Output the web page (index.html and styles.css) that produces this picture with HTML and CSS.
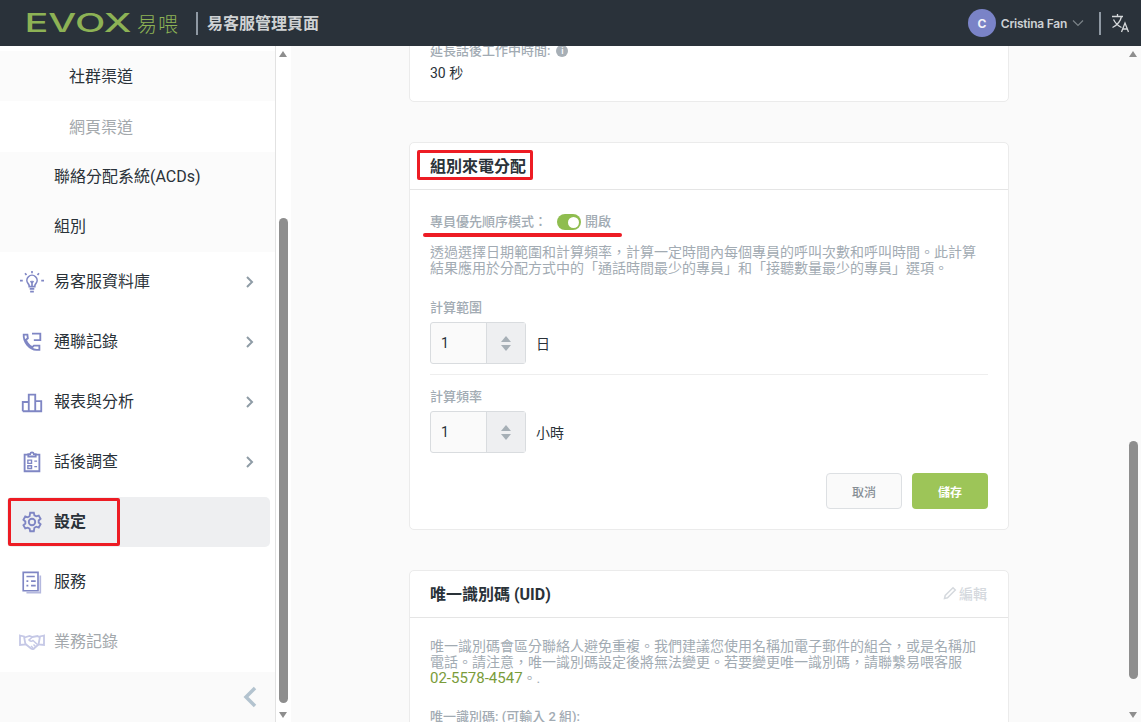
FILE: index.html
```html
<!DOCTYPE html>
<html lang="zh-Hant">
<head>
<meta charset="utf-8">
<title>易客服管理頁面</title>
<link rel="stylesheet" href="styles.css">
</head>
<body>
<header class="topbar">
  <div class="brand">
    <svg class="logo" width="104" height="26" viewBox="0 0 104 26"><text x="-2.500" y="22" class="logo-text" textLength="107" lengthAdjust="spacingAndGlyphs">EVOX</text></svg>
    <span class="logo-cn">易喂</span>
    <span class="bar"></span>
    <span class="title">易客服管理頁面</span>
  </div>
  <div class="account">
    <span class="avatar">C</span>
    <span class="name">Cristina Fan</span>
    <svg class="caret" width="12" height="8" viewBox="0 0 12 8"><path d="M1 1.500l5 5 5-5" fill="none" stroke="#7b8388" stroke-width="1.200"/></svg>
    <span class="bar bar-right"></span>
    <svg class="lang" width="20" height="20" viewBox="0 0 20 20" fill="none" stroke="#d6d9db" stroke-width="1.300"><path d="M1 3.500h11M6.500 1v2.500M2.500 6.500c2 4 5 6.500 8 8M10.500 3.500c-1 4.500-4 8.500-9 11"/><path d="M10.500 19l3.500-9 3.500 9M12 16h4.500"/></svg>
  </div>
</header>
<div class="shell">
  <aside class="sidebar">
    <nav class="nav">
      <div class="subitem subitem-deep shaded">社群渠道</div>
      <div class="subitem subitem-deep subitem-tall muted">網頁渠道</div>
      <div class="subitem shaded">聯絡分配系統(ACDs)</div>
      <div class="subitem shaded">組別</div>
      <div class="item">
        <svg class="ico" viewBox="0 0 26 26" fill="none" stroke="#7f86c4" stroke-width="1.800"><path d="M9 15a5.500 5.500 0 1 1 8 0c-.8 1-1 1.500-1 3h-6c0-1.500-.2-2-1-3zM10.500 20.500h5M11 23.500h4M11.500 12l1.500 2 1.500-2M13 14v4"/><path d="M13 1v2.500M5.500 3.500l1.500 2M20.500 3.500l-1.500 2M0 11.500h3M23 11.500h3"/></svg>
        <span class="label">易客服資料庫</span>
        <svg class="chev" viewBox="0 0 10 14"><path d="M2 2l5 5-5 5" fill="none" stroke="#8f9ca6" stroke-width="2"/></svg>
      </div>
      <div class="item">
        <svg class="ico" viewBox="0 0 26 26" fill="none" stroke="#7f86c4" stroke-width="2"><path d="M4 5h4l.5 4-2 1.500c1 3.500 3.500 6.500 7 8l1.500-1.500h6v4.500H18C10 21 3.500 13 4 5z"/><path d="M13 4h9v7h-7"/></svg>
        <span class="label">通聯記錄</span>
        <svg class="chev" viewBox="0 0 10 14"><path d="M2 2l5 5-5 5" fill="none" stroke="#8f9ca6" stroke-width="2"/></svg>
      </div>
      <div class="item">
        <svg class="ico" viewBox="0 0 26 26" fill="none" stroke="#7f86c4" stroke-width="2"><path d="M3 23V13h6.500v10M9.500 23V5h7v18M16.500 23V12H23v11zM3 23h20"/></svg>
        <span class="label">報表與分析</span>
        <svg class="chev" viewBox="0 0 10 14"><path d="M2 2l5 5-5 5" fill="none" stroke="#8f9ca6" stroke-width="2"/></svg>
      </div>
      <div class="item">
        <svg class="ico" viewBox="0 0 26 26" fill="none" stroke="#7f86c4" stroke-width="2"><path d="M9 5H5v18h16V5h-4M9 7V4.500h2C11.500 2 14.500 2 15 4.500h2V7z"/><path d="M8.500 11h4v3.500h-4zM8.500 17h4v3h-4zM15.500 12h3M15.500 18h3" stroke-width="1.500"/></svg>
        <span class="label">話後調查</span>
        <svg class="chev" viewBox="0 0 10 14"><path d="M2 2l5 5-5 5" fill="none" stroke="#8f9ca6" stroke-width="2"/></svg>
      </div>
      <div class="item active">
        <svg class="ico" viewBox="0 0 26 26" fill="none" stroke="#7f86c4" stroke-width="2"><circle cx="13" cy="13" r="3.500"/><path d="M11 3h4l.6 2.800 2 1.100 2.700-.9 2 3.500-2.100 1.900v2.200l2.100 1.900-2 3.500-2.700-.9-2 1.100L15 23h-4l-.6-2.800-2-1.100-2.700.9-2-3.500 2.100-1.900v-2.200L3.700 10.500l2-3.500 2.700.9 2-1.100z"/></svg>
        <span class="label">設定</span>
        <span class="mark mark-nav"></span>
      </div>
      <div class="item">
        <svg class="ico" viewBox="0 0 26 26" fill="none" stroke="#7f86c4" stroke-width="1.800"><path d="M3.500 2.500h16v20h-16z"/><path d="M22 6v18.500H7" stroke="#b4b8de"/><path d="M7 7h9M7 12h2M12 12h5M7 17h2M12 17h5"/></svg>
        <span class="label">服務</span>
      </div>
      <div class="item muted">
        <svg class="ico ico-wide" viewBox="0 0 26 18" fill="none" stroke="#c5c8e6" stroke-width="1.800"><path d="M1 2.500l4 1 1.500 8-5.500.5zM25 2.500l-4 1-1.500 8 5.500.5z"/><path d="M5.500 4.500l5-1.500 3 1 5-1 2.500 1.500M6.500 11l5.500 4.500c1.500 1 3 .5 3.500-.5l4-3.500"/><path d="M13.500 4l-3.500 3c1 1.500 3 1.500 4 .5l5 4.500M12 13l2 2M14.500 11.500l2 2" stroke-width="1.500"/></svg>
        <span class="label">業務記錄</span>
      </div>
    </nav>
    <div class="collapse">
      <svg width="16" height="22" viewBox="0 0 16 22"><path d="M13 2L4 11l9 9" fill="none" stroke="#b3c3cf" stroke-width="3.500"/></svg>
    </div>
  </aside>
  <div class="scrollbar scrollbar-nav"><span class="arrow-up"></span><span class="thumb"></span><span class="arrow-down"></span></div>
  <main class="content">
    <section class="card card-top">
      <div class="card-top-body">
        <div class="field-label">延長話後工作中時間:<span class="info">i</span></div>
        <div class="value">30 秒</div>
      </div>
    </section>
    <section class="card">
      <div class="card-head"><h2>組別來電分配</h2><span class="mark mark-title"></span></div>
      <div class="card-body">
        <div class="mode">
          <span>專員優先順序模式：</span>
          <span class="toggle"><span class="knob"></span></span>
          <span>開啟</span>
          <span class="underline"></span>
        </div>
        <p class="desc">透過選擇日期範圍和計算頻率，計算一定時間內每個專員的呼叫次數和呼叫時間。此計算結果應用於分配方式中的「通話時間最少的專員」和「接聽數量最少的專員」選項。</p>
        <div class="group group-line">
          <div class="field-label">計算範圍</div>
          <div class="stepper-row">
            <div class="stepper"><span class="num">1</span><span class="spin"><span class="up"></span><span class="down"></span></span></div>
            <span class="unit">日</span>
          </div>
        </div>
        <div class="group group-next">
          <div class="field-label">計算頻率</div>
          <div class="stepper-row">
            <div class="stepper"><span class="num">1</span><span class="spin"><span class="up"></span><span class="down"></span></span></div>
            <span class="unit">小時</span>
          </div>
        </div>
        <div class="actions">
          <button class="btn btn-cancel">取消</button>
          <button class="btn btn-save">儲存</button>
        </div>
      </div>
    </section>
    <section class="card">
      <div class="card-head card-head-split">
        <h2>唯一識別碼 (UID)</h2>
        <span class="edit"><svg width="14" height="14" viewBox="0 0 14 14" fill="none" stroke="#d5d9de" stroke-width="1.500"><path d="M1.500 12.500l.7-3L10 1.700l2.300 2.300-7.800 7.800z"/></svg>編輯</span>
      </div>
      <div class="card-body">
        <p class="desc desc-uid">唯一識別碼會區分聯絡人避免重複。我們建議您使用名稱加電子郵件的組合，或是名稱加電話。請注意，唯一識別碼設定後將無法變更。若要變更唯一識別碼，請聯繫易喂客服<br><span class="phone">02-5578-4547</span>。.</p>
        <div class="field-label">唯一識別碼: (可輸入 2 組):</div>
      </div>
    </section>
  </main>
  <div class="scrollbar scrollbar-main"><span class="arrow-up"></span><span class="thumb"></span><span class="arrow-down"></span></div>
</div>
</body>
</html>
```

FILE: styles.css
```css
* { box-sizing: border-box; }
html, body { margin: 0; height: 100%; }
body {
  width: 1141px;
  height: 722px;
  overflow: hidden;
  display: flex;
  flex-direction: column;
  font-family: Roboto, "Noto Sans CJK TC", sans-serif;
  font-size: 14px;
  color: #2a3239;
  background: #fafafa;
}
.topbar {
  height: 46px;
  flex: none;
  background: #2a323a;
  display: flex;
  align-items: center;
  justify-content: space-between;
  padding: 0 10px 0 27px;
  position: relative;
  z-index: 2;
}
.brand, .account { display: flex; align-items: center; }
.logo { display: block; }
.logo-text { font-family: Inter, sans-serif; font-size: 25px; font-weight: 500; fill: #8db255; }
.logo-cn { margin-left: 6px; font-size: 20px; font-weight: 300; color: #8db255; letter-spacing: 1px; width: 44px; white-space: nowrap; }
.bar { display: block; width: 2px; height: 23px; background: #8f99a3; margin-left: 15px; }
.title { margin-left: 9px; font-size: 16px; font-weight: 700; color: #cfd2d4; padding-bottom: 2px; }
.avatar {
  width: 28px; height: 28px; border-radius: 50%;
  background: #7a83c7; color: #f2f3f8;
  display: flex; align-items: center; justify-content: center;
  font: 700 12px Inter, sans-serif;
}
.name { margin-left: 5px; font: 600 12px Inter, sans-serif; letter-spacing: -.25px; color: #cdd1d4; }
.caret { margin-left: 5px; }
.bar-right { margin-left: 15px; height: 23px; }
.lang { margin-left: 10px; }

.shell { flex: 1; display: flex; min-height: 0; }
.sidebar {
  width: 276px;
  flex: none;
  background: #fff;
  border-right: 1px solid #e2e2e2;
  display: flex;
  flex-direction: column;
}
.nav { flex: 1; padding-top: 5px; }
.subitem {
  height: 50px;
  display: flex;
  align-items: center;
  padding: 0 0 4px 54px;
  font-size: 16px;
  background: #fff;
}
.subitem.shaded { background: #fbfbfb; }
.subitem-deep { padding-left: 69px; padding-bottom: 2px; }
.subitem-tall { height: 51px; }
.subitem.muted, .item.muted .label { color: #a3a8ac; }
.item {
  height: 50px;
  margin: 10px 5px 0 7px;
  display: flex;
  align-items: center;
  padding-left: 13px;
  padding-right: 15px;
  position: relative;
  border-radius: 5px;
  font-size: 16px;
}
.subitem + .item { margin-top: 5px; }
.item.active { background: #eeeff1; font-weight: 700; }
.ico { width: 24px; height: 24px; flex: none; }
.ico-wide { width: 26px; height: 18px; margin-left: -1px; margin-right: -1px; }
.label { margin-left: 10px; flex: 1; padding-bottom: 4px; }
.chev { width: 10px; height: 14px; flex: none; }
.collapse {
  height: 50px;
  flex: none;
  background: #fafafa;
  display: flex;
  align-items: center;
  justify-content: flex-end;
  padding-right: 17px;
}
.mark { position: absolute; border: 3px solid #ed1c24; border-radius: 2px; pointer-events: none; }
.mark-nav { left: 1px; top: 1px; width: 112px; height: 48px; }
.scrollbar {
  width: 15px;
  flex: none;
  background: #fff;
  position: relative;
}
.scrollbar-main { width: 13px; background: #fafafa; }
.thumb { position: absolute; background: #8e8e8e; border-radius: 5px; }
.scrollbar-nav .thumb { left: 3px; width: 9px; top: 172px; bottom: 19px; }
.scrollbar-main .thumb { left: 1px; width: 9px; top: 395px; bottom: 43px; }
.arrow-up, .arrow-down { position: absolute; left: 3px; width: 0; height: 0; border-left: 4.500px solid transparent; border-right: 4.500px solid transparent; }
.arrow-up { top: 5px; border-bottom: 6px solid #8e8e8e; }
.arrow-down { bottom: 4px; border-top: 6px solid #8e8e8e; }
.scrollbar-main .arrow-up, .scrollbar-main .arrow-down { left: 1px; }

.content {
  flex: 1;
  min-width: 0;
  overflow: hidden;
  padding: 0 119px 0 118px;
}
.card {
  background: #fff;
  border: 1px solid #ebebeb;
  border-radius: 5px;
  margin-bottom: 40px;
}
.card-top { margin-top: -40px; height: 96px; }
.card-top-body { padding: 35px 20px 0; }
.value { margin-top: 2px; font-size: 14px; }
.field-label { font-size: 13px; font-weight: 500; color: #a2abb3; line-height: 18px; display: flex; align-items: center; }
.info { width: 12px; height: 12px; border-radius: 50%; background: #a7afb6; color: #fff; font-size: 9px; line-height: 12px; text-align: center; margin-left: 6px; }
.card-head {
  height: 47px;
  border-bottom: 1px solid #e5e5e5;
  display: flex;
  align-items: center;
  padding: 0 20px 3px;
  position: relative;
}
.card-head-split { justify-content: space-between; padding-right: 21px; }
h2 { margin: 0; font-size: 16px; font-weight: 700; color: #2a3239; }
.mark-title { left: 7px; top: 7px; width: 116px; height: 30px; }
.edit { display: flex; align-items: center; font-size: 14px; font-weight: 500; color: #d5d9de; gap: 2px; }
.card-body { padding: 20px 20px 20px; }
.mode { display: flex; align-items: center; height: 22px; padding-bottom: 2px; font-size: 13px; font-weight: 500; color: #a2abb3; position: relative; }
.toggle { width: 24px; height: 16px; border-radius: 8px; background: #8fbd4f; margin: 4px 4px 0 10px; position: relative; flex: none; }
.knob { position: absolute; right: 2px; top: 2.500px; width: 11px; height: 11px; border-radius: 50%; background: #fff; }
.underline { position: absolute; left: -7px; top: 23px; width: 199px; height: 4px; border-radius: 2px; background: #ed1c24; }
.desc { margin: 12px 0 0; font-size: 14px; line-height: 16px; color: #a2abb3; }
.desc-uid { margin-top: 0; padding-top: 0; }
.group { padding-top: 23px; }
.group-line { padding-bottom: 10px; border-bottom: 1px solid #eeeeee; }
.group-next { padding-top: 13px; }
.stepper-row { display: flex; align-items: center; margin-top: 5px; }
.stepper {
  width: 96px; height: 42px;
  border: 1px solid #d9dcdf;
  border-radius: 3px;
  display: flex;
  background: #fafafa;
}
.num { width: 55px; padding-left: 10px; line-height: 40px; font-size: 14px; color: #2a3239; }
.spin {
  flex: 1;
  background: #eeeff1;
  border-left: 1px solid #d9dcdf;
  display: flex;
  flex-direction: column;
  align-items: center;
  justify-content: center;
  gap: 3px;
}
.up, .down { width: 0; height: 0; border-left: 5px solid transparent; border-right: 5px solid transparent; }
.up { border-bottom: 6px solid #a6afb6; }
.down { border-top: 6px solid #a6afb6; }
.unit { margin-left: 10px; font-size: 14px; }
.actions { display: flex; justify-content: flex-end; gap: 10px; margin-top: 20px; }
.btn { width: 76px; height: 36px; border-radius: 4px; font: 500 12px Roboto, "Noto Sans CJK TC", sans-serif; }
.btn-cancel { background: #fafafa; border: 1px solid #dde0e3; color: #858d94; }
.btn-save { background: #9dc558; border: 0; color: #fff; font-weight: 700; }
.phone { color: #7a9c3a; font-size: 15px; }
.card-body .desc-uid + .field-label { margin-top: 22px; }
```
